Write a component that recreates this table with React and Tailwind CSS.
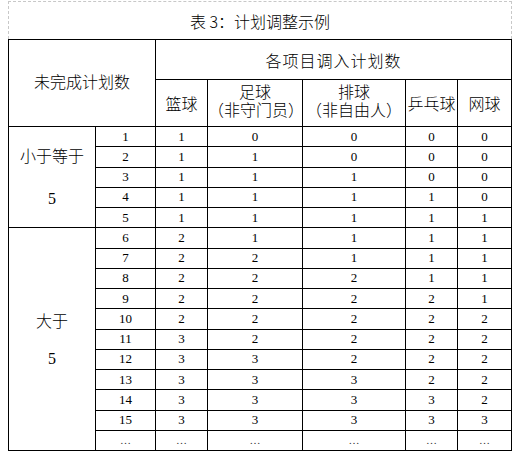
import React from "react";

const rows = [
  [1, 1, 0, 0, 0, 0],
  [2, 1, 1, 0, 0, 0],
  [3, 1, 1, 1, 0, 0],
  [4, 1, 1, 1, 1, 0],
  [5, 1, 1, 1, 1, 1],
  [6, 2, 1, 1, 1, 1],
  [7, 2, 2, 1, 1, 1],
  [8, 2, 2, 2, 1, 1],
  [9, 2, 2, 2, 2, 1],
  [10, 2, 2, 2, 2, 2],
  [11, 3, 2, 2, 2, 2],
  [12, 3, 3, 2, 2, 2],
  [13, 3, 3, 3, 2, 2],
  [14, 3, 3, 3, 3, 2],
  [15, 3, 3, 3, 3, 3],
];

const cn = "font-['Noto_Sans_CJK_SC',sans-serif] font-light";
const num = "font-['Liberation_Serif',serif]";
const td = "border border-black p-0 text-center align-middle";

const App = () => {
  return (
    <div className="bg-white w-[518px] h-[454px] pt-px pl-2 text-black">
      <div
        className={`w-[504px] h-[38px] border-x border-t border-dashed border-[#c8c8c8] flex items-center justify-center text-[16px] ${cn}`}
      >
        表 3：计划调整示例
      </div>

      <table className="w-[504px] table-fixed border-collapse">
        <colgroup>
          <col className="w-[87px]" />
          <col className="w-[60px]" />
          <col className="w-[52px]" />
          <col className="w-[95px]" />
          <col className="w-[103px]" />
          <col className="w-[52px]" />
          <col className="w-[54px]" />
        </colgroup>
        <tbody>
          <tr className="h-[40px]">
            <td colSpan={2} rowSpan={2} className={`${td} ${cn} text-[16px] leading-[18px] pb-[4px]`}>
              未完成计划数
            </td>
            <td colSpan={5} className={`${td} ${cn} text-[16px] leading-[18px] tracking-[1px]`}>
              各项目调入计划数
            </td>
          </tr>
          <tr className={`h-[47px] ${cn} text-[16px] leading-[18px]`}>
            <td className={td}>篮球</td>
            <td className={`${td} pb-[6px]`}>
              <div>足球</div>
              <div>（非守门员）</div>
            </td>
            <td className={`${td} pb-[6px]`}>
              <div>排球</div>
              <div>（非自由人）</div>
            </td>
            <td className={td}>乒乓球</td>
            <td className={td}>网球</td>
          </tr>

          {rows.map((r, i) => (
            <tr key={r[0]} className={`h-[20.25px] ${num} text-[13px] leading-[14px]`}>
              {i === 0 && (
                <td rowSpan={5} className={td}>
                  <div className="flex flex-col items-center gap-[26px]">
                    <span className={`${cn} text-[16px] leading-[17px]`}>小于等于</span>
                    <span className="text-[16px] leading-[17px]">5</span>
                  </div>
                </td>
              )}
              {i === 5 && (
                <td rowSpan={11} className={td}>
                  <div className="flex flex-col items-center gap-[21px]">
                    <span className={`${cn} text-[16px] leading-[17px]`}>大于</span>
                    <span className="text-[16px] leading-[17px]">5</span>
                  </div>
                </td>
              )}
              {r.map((v, j) => (
                <td key={j} className={td}>
                  {v}
                </td>
              ))}
            </tr>
          ))}

          <tr className={`h-[20.25px] ${num} text-[11px] leading-[14px] text-[#333]`}>
            {[0, 1, 2, 3, 4, 5].map((k) => (
              <td key={k} className={td}>
                …
              </td>
            ))}
          </tr>
        </tbody>
      </table>
    </div>
  );
};

export default App;
